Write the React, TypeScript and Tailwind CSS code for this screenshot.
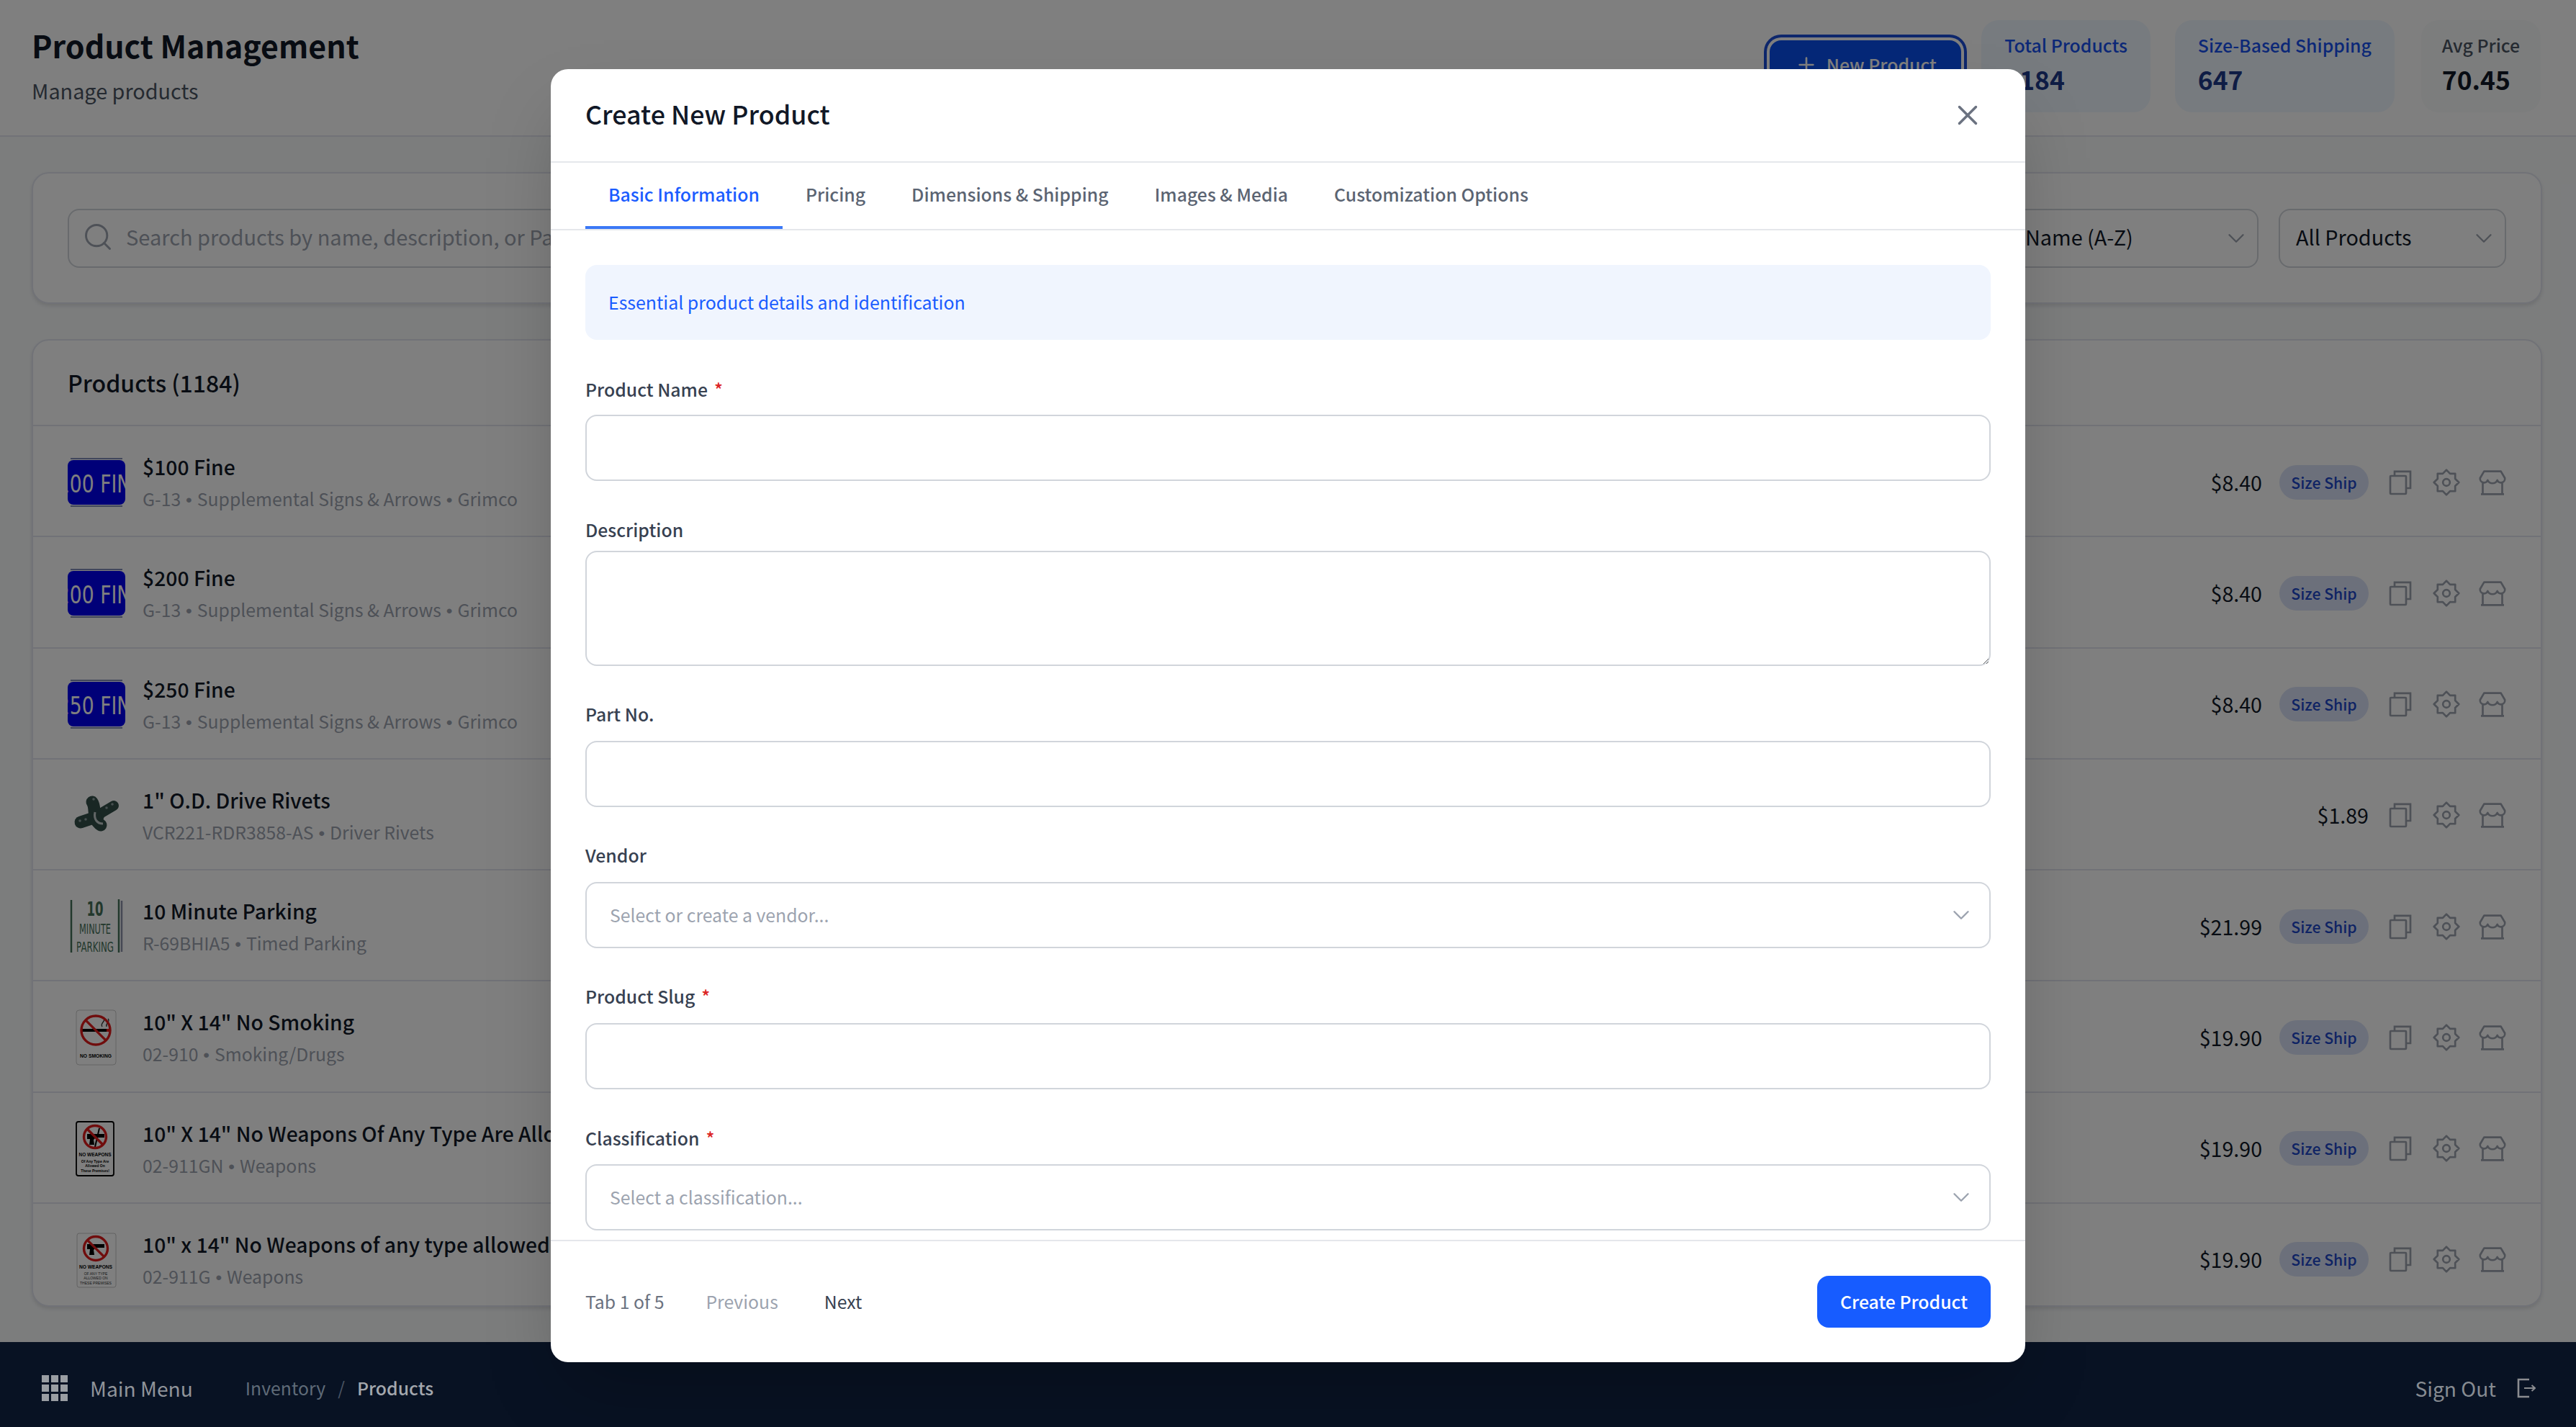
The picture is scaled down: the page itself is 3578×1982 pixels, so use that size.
import React from "react";
import { ChevronDown, Search, X, Plus } from "lucide-react";

const FONT = "font-['Noto_Sans_CJK_SC','Noto_Sans_CJK_JP','Noto_Sans',sans-serif]";

function FineSign({ amount }: { amount: string }) {
  return (
    <svg viewBox="0 0 80 80" className="h-[80px] w-[80px] shrink-0">
      <line x1="4" y1="7" x2="76" y2="7" stroke="#5a6aa0" strokeWidth="1.5" />
      <line x1="4" y1="73" x2="76" y2="73" stroke="#5a6aa0" strokeWidth="1.5" />
      <rect x="0" y="9" width="80" height="62" rx="8" fill="#0000f0" />
      <svg x="0" y="9" width="80" height="62" viewBox="0 0 80 62">
        <text x="-31" y="45" fontSize="33" fill="#ffffff" textLength="136" lengthAdjust="spacingAndGlyphs" fontFamily="'DejaVu Sans','Liberation Sans',sans-serif">{`$${amount} FINE`}</text>
      </svg>
    </svg>
  );
}

function Rivet() {
  return (
    <svg viewBox="0 0 80 80" className="h-[80px] w-[80px] shrink-0">
      <g stroke="#324e48" strokeLinecap="round" fill="none">
        <line x1="18" y1="50" x2="42" y2="42" strokeWidth="17" />
        <line x1="42" y1="40" x2="64" y2="27" strokeWidth="14" />
        <path d="M34 22 C 40 30, 33 46, 46 54" strokeWidth="17" />
      </g>
      <path d="M38 36 C 36 46, 41 52, 49 52" stroke="#c4cccc" strokeWidth="3" fill="none" />
      <g fill="#8fa0a0">
        <circle cx="17" cy="48" r="1.8" />
        <circle cx="25" cy="46" r="1.8" />
        <circle cx="54" cy="30" r="1.8" />
        <circle cx="62" cy="25" r="1.8" />
        <circle cx="36" cy="18" r="1.8" />
      </g>
    </svg>
  );
}

function Parking() {
  const f = "'DejaVu Sans','Liberation Sans',sans-serif";
  return (
    <svg viewBox="0 0 80 80" className="h-[80px] w-[80px] shrink-0">
      <line x1="5" y1="3" x2="5" y2="76" stroke="#447058" strokeWidth="2.5" />
      <line x1="71" y1="2" x2="71" y2="76" stroke="#447058" strokeWidth="2.5" />
      <line x1="75" y1="4" x2="75" y2="75" stroke="#8a90a8" strokeWidth="2.5" />
      <text x="38" y="25" textAnchor="middle" fontSize="27" fontWeight="700" textLength="23" lengthAdjust="spacingAndGlyphs" fontFamily={f} fill="#447058">10</text>
      <text x="38" y="50" textAnchor="middle" fontSize="19" textLength="44" lengthAdjust="spacingAndGlyphs" fontFamily={f} fill="#447058">MINUTE</text>
      <text x="38" y="75" textAnchor="middle" fontSize="19" textLength="52" lengthAdjust="spacingAndGlyphs" fontFamily={f} fill="#447058">PARKING</text>
    </svg>
  );
}

function Prohibit({ cx, cy, r }: { cx: number; cy: number; r: number }) {
  const d = r * 0.707;
  return (
    <g fill="none" stroke="#e01a1a" strokeWidth="3.4">
      <circle cx={cx} cy={cy} r={r} />
      <line x1={cx - d} y1={cy - d} x2={cx + d} y2={cy + d} />
    </g>
  );
}

function NoSmoking() {
  return (
    <svg viewBox="0 0 80 80" className="h-[80px] w-[80px] shrink-0">
      <rect x="12" y="2" width="55" height="76" rx="4" fill="#fff" stroke="#c9c9c9" strokeWidth="1" />
      <rect x="20" y="28" width="34" height="4" fill="#000" />
      <rect x="54" y="28" width="4" height="4" fill="#e01a1a" />
      <path d="M48 25 C 44 20, 54 18, 50 12 M54 25 C 52 20, 60 18, 56 14" fill="none" stroke="#333" strokeWidth="1.3" />
      <Prohibit cx={39} cy={30} r={20} />
      <text x="39" y="68" textAnchor="middle" fontSize="8" fontWeight="700" textLength="44" lengthAdjust="spacingAndGlyphs" fontFamily="'Liberation Sans',sans-serif" fill="#000">NO SMOKING</text>
    </svg>
  );
}

function Gun({ x, y }: { x: number; y: number }) {
  return <path transform={`translate(${x} ${y})`} d="M0 0 H24 V5 H12 L9 8 L10 15 H3 L4 7 H0 Z" fill="#000" />;
}

function NoWeaponsBlack() {
  const f = "'Liberation Sans',sans-serif";
  return (
    <svg viewBox="0 0 80 80" className="h-[80px] w-[80px] shrink-0">
      <rect x="12" y="3" width="52" height="75" rx="3" fill="#fff" stroke="#000" strokeWidth="1.8" />
      <Gun x={27} y={20} />
      <path d="M44 12 L38 38" stroke="#000" strokeWidth="2" />
      <Prohibit cx={38} cy={24} r={15.5} />
      <text x="38" y="51" textAnchor="middle" fontSize="8" fontWeight="700" textLength="45" lengthAdjust="spacingAndGlyphs" fontFamily={f}>NO WEAPONS</text>
      <text x="38" y="60" textAnchor="middle" fontSize="5" fontWeight="700" fontFamily={f}>Of Any Type Are</text>
      <text x="38" y="66" textAnchor="middle" fontSize="5" fontWeight="700" fontFamily={f}>Allowed On</text>
      <text x="38" y="73" textAnchor="middle" fontSize="5" fontWeight="700" fontFamily={f}>These Premises!</text>
    </svg>
  );
}

function NoWeaponsGray() {
  const f = "'Liberation Sans',sans-serif";
  return (
    <svg viewBox="0 0 80 80" className="h-[80px] w-[80px] shrink-0">
      <rect x="13" y="4" width="54" height="75" rx="3" fill="#fff" stroke="#c4c4c4" strokeWidth="1" />
      <Gun x={27} y={19} />
      <Prohibit cx={39} cy={25} r={16.5} />
      <text x="39" y="53" textAnchor="middle" fontSize="8" fontWeight="700" textLength="46" lengthAdjust="spacingAndGlyphs" fontFamily={f}>NO WEAPONS</text>
      <text x="39" y="62" textAnchor="middle" fontSize="5" fontFamily={f} fill="#333">OF ANY TYPE</text>
      <text x="39" y="68" textAnchor="middle" fontSize="5" fontFamily={f} fill="#333">ALLOWED ON</text>
      <text x="39" y="75" textAnchor="middle" fontSize="5" fontFamily={f} fill="#333">THESE PREMISES</text>
    </svg>
  );
}

function CopyIcon() {
  return (
    <svg viewBox="0 0 24 24" className="h-[40px] w-[40px]" fill="none" stroke="#9ca3af" strokeWidth="1.6">
      <rect x="3.6" y="6.6" width="13.2" height="15" rx="0.6" />
      <path d="M7.2 6.6V2.9H20.4V16.8H16.8" />
    </svg>
  );
}

function GearIcon() {
  const pts = Array.from({ length: 16 }, (_, k) => {
    const a = (k * Math.PI) / 8 - Math.PI / 2;
    const r = k % 2 === 0 ? 10.4 : 7.9;
    return `${(12 + r * Math.cos(a)).toFixed(2)},${(12 + r * Math.sin(a)).toFixed(2)}`;
  }).join(" ");
  return (
    <svg viewBox="0 0 24 24" className="h-[40px] w-[40px]" fill="none" stroke="#9ca3af" strokeWidth="1.6" strokeLinejoin="round">
      <polygon points={pts} />
      <circle cx="12" cy="12" r="2.9" />
    </svg>
  );
}

function StoreIcon() {
  return (
    <svg viewBox="0 0 24 24" className="h-[40px] w-[40px]" fill="none" stroke="#9ca3af" strokeWidth="1.6" strokeLinejoin="round">
      <path d="M5 2.8H19L22.3 8.4A3.3 3.3 0 0 1 16 10.2A4.4 4.4 0 0 1 8 10.2A3.3 3.3 0 0 1 1.7 8.4Z" />
      <path d="M3.9 12.5V21.7M20.1 12.5V21.7M2.4 21.8H21.6" />
    </svg>
  );
}

type Row = { name: string; sub: string[]; price: string; badge: boolean; thumb: React.ReactNode };

const fineSub = ["G-13", "Supplemental Signs & Arrows", "Grimco"];

const rows: Row[] = [
  { name: "$100 Fine", sub: fineSub, price: "$8.40", badge: true, thumb: <FineSign amount="100" /> },
  { name: "$200 Fine", sub: fineSub, price: "$8.40", badge: true, thumb: <FineSign amount="200" /> },
  { name: "$250 Fine", sub: fineSub, price: "$8.40", badge: true, thumb: <FineSign amount="250" /> },
  { name: '1" O.D. Drive Rivets', sub: ["VCR221-RDR3858-AS", "Driver Rivets"], price: "$1.89", badge: false, thumb: <Rivet /> },
  { name: "10 Minute Parking", sub: ["R-69BHIA5", "Timed Parking"], price: "$21.99", badge: true, thumb: <Parking /> },
  { name: '10" X 14" No Smoking', sub: ["02-910", "Smoking/Drugs"], price: "$19.90", badge: true, thumb: <NoSmoking /> },
  { name: '10" X 14" No Weapons Of Any Type Are Allowed On These Premises', sub: ["02-911GN", "Weapons"], price: "$19.90", badge: true, thumb: <NoWeaponsBlack /> },
  { name: '10" x 14" No Weapons of any type allowed on these premises', sub: ["02-911G", "Weapons"], price: "$19.90", badge: true, thumb: <NoWeaponsGray /> },
];

function ProductRow({ r }: { r: Row }) {
  return (
    <div className="flex h-[154.25px] shrink-0 items-center border-b-2 border-[#e2e5ee] pl-[48px] pr-[47px] pt-[3px]">
      {r.thumb}
      <div className="ml-[24px] min-w-0 flex-1 pt-[2px]">
        <div className="truncate text-[28.3px] font-medium leading-[44px] text-[#111827]">{r.name}</div>
        <div className="mt-[2px] truncate text-[24.8px] leading-[40px] text-[#9ca3af]">
          {r.sub.map((s, i) => (
            <React.Fragment key={s}>
              {i > 0 ? <span className="font-['Liberation_Sans',sans-serif]"> • </span> : null}
              {s}
            </React.Fragment>
          ))}
        </div>
      </div>
      <div className="ml-[24px] text-[28.6px] leading-[44px] text-[#111827]">{r.price}</div>
      {r.badge ? (
        <div className="ml-[24px] flex h-[48px] w-[124px] items-center justify-center rounded-full bg-[#d9e1f6] text-[21.2px] font-medium text-[#1d46c8]">Size Ship</div>
      ) : null}
      <div className="ml-[24px] flex items-center gap-[24px]">
        <CopyIcon />
        <GearIcon />
        <StoreIcon />
      </div>
    </div>
  );
}

function FakeSelect({ text, width }: { text: string; width: string }) {
  return (
    <div className={`flex h-[82px] shrink-0 items-center justify-between rounded-[16px] border-2 border-[#d1d5db] bg-white pl-[22px] pr-[10px] text-[28.8px] text-[#111827] ${width}`}>
      <span className="pb-[3px]">{text}</span>
      <ChevronDown size={38} color="#9ca3af" strokeWidth={1.5} />
    </div>
  );
}

function Stat({ label, value, tone }: { label: string; value: string; tone: "blue" | "gray" }) {
  const blue = tone === "blue";
  return (
    <div className={`h-[128px] rounded-[24px] pt-[14px] ${blue ? "bg-[#eff6ff] px-[32px]" : "bg-[#f9fafb] px-[29px]"}`}>
      <div className={`text-[24.8px] font-medium leading-[40px] whitespace-nowrap ${blue ? "text-[#1650ee]" : "text-[#4b5563]"}`}>{label}</div>
      <div className={`mt-[4px] text-[35.4px] font-bold leading-[48px] ${blue ? "text-[#1e3a8a]" : "text-[#111827]"}`}>{value}</div>
    </div>
  );
}

function Field({ label, required, mb, top, children }: { label: string; required?: boolean; mb: string; top: string; children: React.ReactNode }) {
  return (
    <div className={top}>
      <div className={`h-[40px] text-[24.8px] font-medium leading-[40px] text-[#374151] ${mb}`}>
        {label}
        {required ? <span className="ml-[9px] text-[#dc2626]">*</span> : null}
      </div>
      {children}
    </div>
  );
}

const inputCls = "block h-[92px] w-full rounded-[16px] border-2 border-[#d1d5db] bg-white px-[32px] text-[28px] outline-none";

function ModalSelect({ text }: { text: string }) {
  return (
    <div className="flex h-[92px] items-center justify-between rounded-[16px] border-2 border-[#d1d5db] bg-white pl-[32px] pr-[20px] text-[24.8px] text-[#9ca3af]">
      <span>{text}</span>
      <ChevronDown size={38} color="#9ca3af" strokeWidth={1.5} />
    </div>
  );
}

const tabs = ["Basic Information", "Pricing", "Dimensions & Shipping", "Images & Media", "Customization Options"];

export default function App() {
  return (
    <div className={`relative flex h-[1982px] w-full flex-col overflow-hidden bg-[#f8fafb] ${FONT}`}>
      <header className="flex h-[190px] shrink-0 items-start border-b-2 border-[#e2e5ee] bg-white pl-[44px] pr-[49px]">
        <div className="flex-1 pt-[30px]">
          <h1 className="text-[42.9px] font-bold leading-[64px] text-[#111827]">Product Management</h1>
          <p className="mt-[8px] text-[28.8px] leading-[48px] text-[#4b5563]">Manage products</p>
        </div>
        <button className="mr-[28px] mt-[56px] flex h-[68px] w-[266px] items-center justify-center gap-[12px] rounded-[16px] bg-[#0a50f0] text-[24.8px] font-medium text-white shadow-[0_0_0_4px_#fff,0_0_0_8px_#1d4ed8]">
          <Plus size={32} strokeWidth={2} />
          New Product
        </button>
        <div className="mt-[28px] flex">
          <Stat label="Total Products" value="1184" tone="blue" />
          <div className="ml-[34px]">
            <Stat label="Size-Based Shipping" value="647" tone="blue" />
          </div>
          <div className="ml-[37px]">
            <Stat label="Avg Price" value="70.45" tone="gray" />
          </div>
        </div>
      </header>

      <main className="flex min-h-0 flex-1 flex-col gap-[49px] pb-[49px] pl-[44px] pr-[47px] pt-[49px]">
        <section className="flex h-[183px] shrink-0 items-center gap-[28px] rounded-[24px] border-2 border-[#e2e5ee] bg-white px-[48px] shadow-[0_3px_5px_rgba(0,0,0,0.1)]">
          <div className="flex h-[82px] min-w-0 flex-1 items-center rounded-[16px] border-2 border-[#d1d5db] bg-white pl-[18px]">
            <Search size={44} color="#9ca3af" strokeWidth={1.6} className="mb-[3px] shrink-0" />
            <input
              readOnly
              placeholder="Search products by name, description, or Part No..."
              className="mb-[3px] ml-[17px] w-full bg-transparent text-[29px] outline-none placeholder:text-[#9ca3af]"
            />
          </div>
          <FakeSelect text="Name (A-Z)" width="w-[348px]" />
          <FakeSelect text="All Products" width="w-[316px]" />
        </section>

        <section className="flex min-h-0 flex-1 flex-col overflow-hidden rounded-[24px] border-2 border-[#e2e5ee] bg-white shadow-[0_3px_5px_rgba(0,0,0,0.1)]">
          <div className="flex h-[119px] shrink-0 items-center border-b-2 border-[#e2e5ee] pb-[2px] pl-[48px] text-[32px] font-medium text-[#111827]">Products (1184)</div>
          <div className="min-h-0 flex-1 overflow-hidden">
            {rows.map((r) => (
              <ProductRow key={r.name} r={r} />
            ))}
          </div>
        </section>
      </main>

      <div className="absolute inset-0 z-10 bg-black/50" />

      <nav className="relative z-[15] flex h-[118px] shrink-0 items-center bg-[#081223] pl-[58px] pr-[56px] pt-[10px]">
        <div className="grid h-[36px] w-[36px] grid-cols-3 gap-[3px]">
          {Array.from({ length: 9 }, (_, i) => (
            <span key={i} className="bg-[#9a9ea3]" />
          ))}
        </div>
        <span className="ml-[31px] text-[28.2px] text-[#90949a]">Main Menu</span>
        <span className="ml-[73px] text-[24.8px] text-[#5f6b78]">Inventory</span>
        <span className="mx-[17px] text-[24.8px] text-[#4b5563]">/</span>
        <span className="text-[24.8px] font-medium text-[#a3a7ad]">Products</span>
        <span className="ml-auto text-[28.2px] text-[#868b91]">Sign Out</span>
        <svg viewBox="0 0 26 28" className="ml-[29px] h-[28px] w-[26px]" fill="none" stroke="#8a8c90" strokeWidth="2.6">
          <path d="M17 2H2V26H17" />
          <path d="M10 14H25M20.5 10L25 14L20.5 18" strokeWidth="2" />
        </svg>
      </nav>

      <div className="pointer-events-none absolute inset-0 z-20 flex justify-center pt-[96px]">
        <div className="pointer-events-auto flex h-[1796px] w-[2048px] flex-col overflow-hidden rounded-[24px] bg-white shadow-[0_50px_100px_-24px_rgba(0,0,0,0.25)]">
          <div className="flex h-[130px] shrink-0 items-center justify-between border-b-2 border-[#e5e7eb] pb-[4px] pl-[48px] pr-[57px]">
            <h2 className="text-[35.8px] font-medium text-[#111827]">Create New Product</h2>
            <X size={46} color="#6b7280" strokeWidth={1.8} className="mt-[4px]" />
          </div>
          <div className="flex h-[94px] shrink-0 border-b-2 border-[#e5e7eb] px-[48px]">
            {tabs.map((t, i) => (
              <div
                key={t}
                className={`flex h-[92px] items-center border-b-4 px-[32px] text-[24.8px] font-medium ${
                  i === 0 ? "border-[#3b78f6] text-[#1a5cff]" : "border-transparent text-[#5b6472]"
                }`}
              >
                {t}
              </div>
            ))}
          </div>
          <div className="min-h-0 flex-1 overflow-hidden px-[48px] pt-[48px]">
            <div className="flex h-[104px] items-center rounded-[16px] bg-[#f0f5fe] px-[32px] text-[24.9px] text-[#1a5cff]">
              Essential product details and identification
            </div>
            <Field label="Product Name" required top="mt-[48px]" mb="mb-[16px]">
              <input readOnly className={inputCls} />
            </Field>
            <Field label="Description" top="mt-[47px]" mb="mb-[10px]">
              <textarea readOnly className="block h-[160px] w-full rounded-[16px] border-2 border-[#d1d5db] bg-white px-[32px] py-[20px] text-[28px] outline-none" />
            </Field>
            <Field label="Part No." top="mt-[46px]" mb="mb-[18px]">
              <input readOnly className={inputCls} />
            </Field>
            <Field label="Vendor" top="mt-[46px]" mb="mb-[18px]">
              <ModalSelect text="Select or create a vendor..." />
            </Field>
            <Field label="Product Slug" required top="mt-[46px]" mb="mb-[18px]">
              <input readOnly className={inputCls} />
            </Field>
            <Field label="Classification" required top="mt-[47px]" mb="mb-[17px]">
              <ModalSelect text="Select a classification..." />
            </Field>
          </div>
          <div className="flex h-[170px] shrink-0 items-center border-t-2 border-[#e5e7eb] pl-[48px] pr-[48px] text-[24.8px]">
            <span className="text-[#6b7280]">Tab 1 of 5</span>
            <span className="ml-[58px] text-[#9ca3af]">Previous</span>
            <span className="ml-[64px] text-[#374151]">Next</span>
            <button className="ml-auto h-[72px] w-[241px] rounded-[16px] bg-[#175cff] text-[24.8px] font-medium text-white">Create Product</button>
          </div>
        </div>
      </div>
    </div>
  );
}
